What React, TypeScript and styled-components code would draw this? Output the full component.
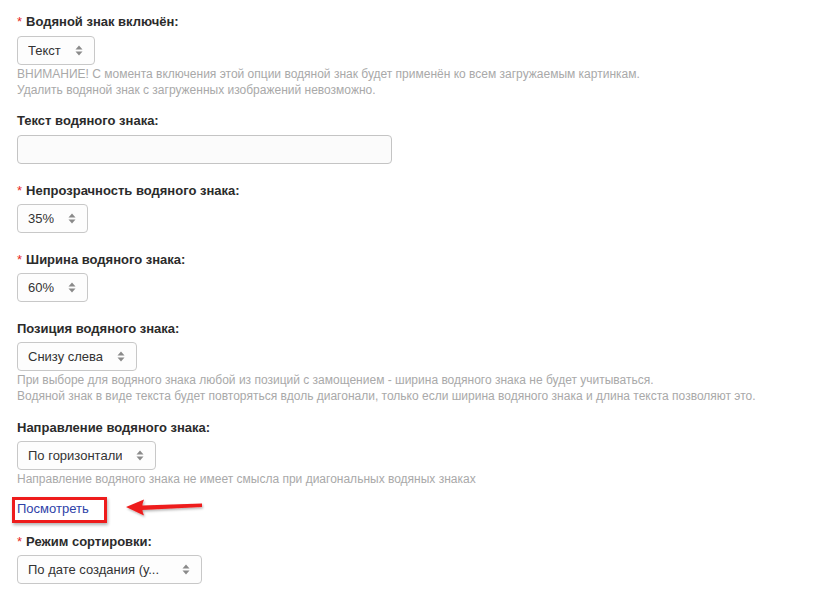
import * as React from "react";
import styled, { createGlobalStyle } from "styled-components";

const GlobalStyle = createGlobalStyle`
  body {
    margin: 0;
    background: #ffffff;
    font-family: "Liberation Sans", Arial, sans-serif;
  }
`;

const Page = styled.div`
  display: flex;
  flex-direction: column;
  padding: 13px 17px 0;
  width: 823px;
  height: 592px;
  box-sizing: border-box;
  overflow: hidden;
`;

const Field = styled.div<{ $gap?: number }>`
  display: flex;
  flex-direction: column;
  align-items: flex-start;
  margin-bottom: ${p => (p.$gap !== undefined ? p.$gap : 18)}px;
`;

const Label = styled.div<{ $mb?: number }>`
  font-size: 13px;
  line-height: 18px;
  font-weight: bold;
  color: #2b2b2b;
  margin-bottom: ${p => (p.$mb !== undefined ? p.$mb : 4)}px;
`;

const Star = styled.span`
  color: #e8281e;
  font-weight: normal;
  margin-right: 4px;
`;

const SelectBox = styled.div<{ $width?: number }>`
  display: flex;
  align-items: center;
  justify-content: space-between;
  gap: 14px;
  height: 29px;
  box-sizing: border-box;
  padding: 0 11px 0 10px;
  border: 1px solid #c8c8c8;
  border-radius: 4px;
  background: #fdfdfd;
  font-size: 13px;
  color: #333;
  width: ${p => (p.$width ? `${p.$width}px` : "auto")};
`;

const SelectText = styled.span`
  white-space: nowrap;
  overflow: hidden;
`;

const TextInput = styled.div`
  width: 375px;
  height: 29px;
  box-sizing: border-box;
  border: 1px solid #c4c4c4;
  border-radius: 4px;
  background: #fbfbfb;
`;

const Help = styled.div`
  margin-top: 1px;
  font-size: 12px;
  line-height: 16px;
  color: #a9a9a9;
`;

const LinkRow = styled.div`
  position: relative;
  margin-bottom: 16px;
  height: 18px;
`;

const Link = styled.a`
  font-size: 13px;
  line-height: 18px;
  color: #2e42a8;
  text-decoration: none;
`;

const Highlight = styled.div`
  position: absolute;
  left: -5px;
  top: -2px;
  width: 95px;
  height: 26px;
  box-sizing: border-box;
  border: 3px solid #ee1c1c;
  box-shadow: 1px 2px 3px rgba(0, 0, 0, 0.3);
`;

const Arrow = styled.svg`
  position: absolute;
  left: 106px;
  top: -3px;
  overflow: visible;
`;

const Updown = () => (
  <svg width="8" height="11" viewBox="0 0 8 11">
    <path d="M4 0.5 L7.5 4.5 L0.5 4.5 Z" fill="#8a8a8a" />
    <path d="M4 10.5 L7.5 6.5 L0.5 6.5 Z" fill="#8a8a8a" />
  </svg>
);

const Select = ({ value, width }: { value: string; width?: number }) => (
  <SelectBox $width={width}>
    <SelectText>{value}</SelectText>
    <Updown />
  </SelectBox>
);

const App = () => {
  return (
    <Page>
      <GlobalStyle />
      <Field $gap={14}>
        <Label $mb={5}>
          <Star>*</Star>Водяной знак включён:
        </Label>
        <Select value="Текст" />
        <Help>
          ВНИМАНИЕ! С момента включения этой опции водяной знак будет применён ко всем загружаемым картинкам.
          <br />
          Удалить водяной знак с загруженных изображений невозможно.
        </Help>
      </Field>
      <Field>
        <Label $mb={5}>Текст водяного знака:</Label>
        <TextInput />
      </Field>
      <Field>
        <Label>
          <Star>*</Star>Непрозрачность водяного знака:
        </Label>
        <Select value="35%" />
      </Field>
      <Field>
        <Label>
          <Star>*</Star>Ширина водяного знака:
        </Label>
        <Select value="60%" />
      </Field>
      <Field $gap={15}>
        <Label>Позиция водяного знака:</Label>
        <Select value="Снизу слева" />
        <Help>
          При выборе для водяного знака любой из позиций с замощением - ширина водяного знака не будет учитываться.
          <br />
          Водяной знак в виде текста будет повторяться вдоль диагонали, только если ширина водяного знака и длина текста позволяют это.
        </Help>
      </Field>
      <Field $gap={12}>
        <Label>Направление водяного знака:</Label>
        <Select value="По горизонтали" />
        <Help>Направление водяного знака не имеет смысла при диагональных водяных знаках</Help>
      </Field>
      <LinkRow>
        <Link href="#">Посмотреть</Link>
        <Highlight />
        <Arrow width="80" height="22" viewBox="0 0 80 22">
          <defs>
            <filter id="sh" x="-10%" y="-40%" width="130%" height="200%">
              <feDropShadow dx="1" dy="1.5" stdDeviation="1" floodColor="#000" floodOpacity="0.3" />
            </filter>
          </defs>
          <g filter="url(#sh)">
            <path d="M19 9.5 L79 7.5 L79 11 L19 14 Z" fill="#ee1c1c" />
            <path d="M3 11 L21 3.5 Q17.5 11.5 21 19.5 Z" fill="#ee1c1c" />
          </g>
        </Arrow>
      </LinkRow>
      <Field>
        <Label>
          <Star>*</Star>Режим сортировки:
        </Label>
        <Select value="По дате создания (у..." width={185} />
      </Field>
    </Page>
  );
};

export default App;
